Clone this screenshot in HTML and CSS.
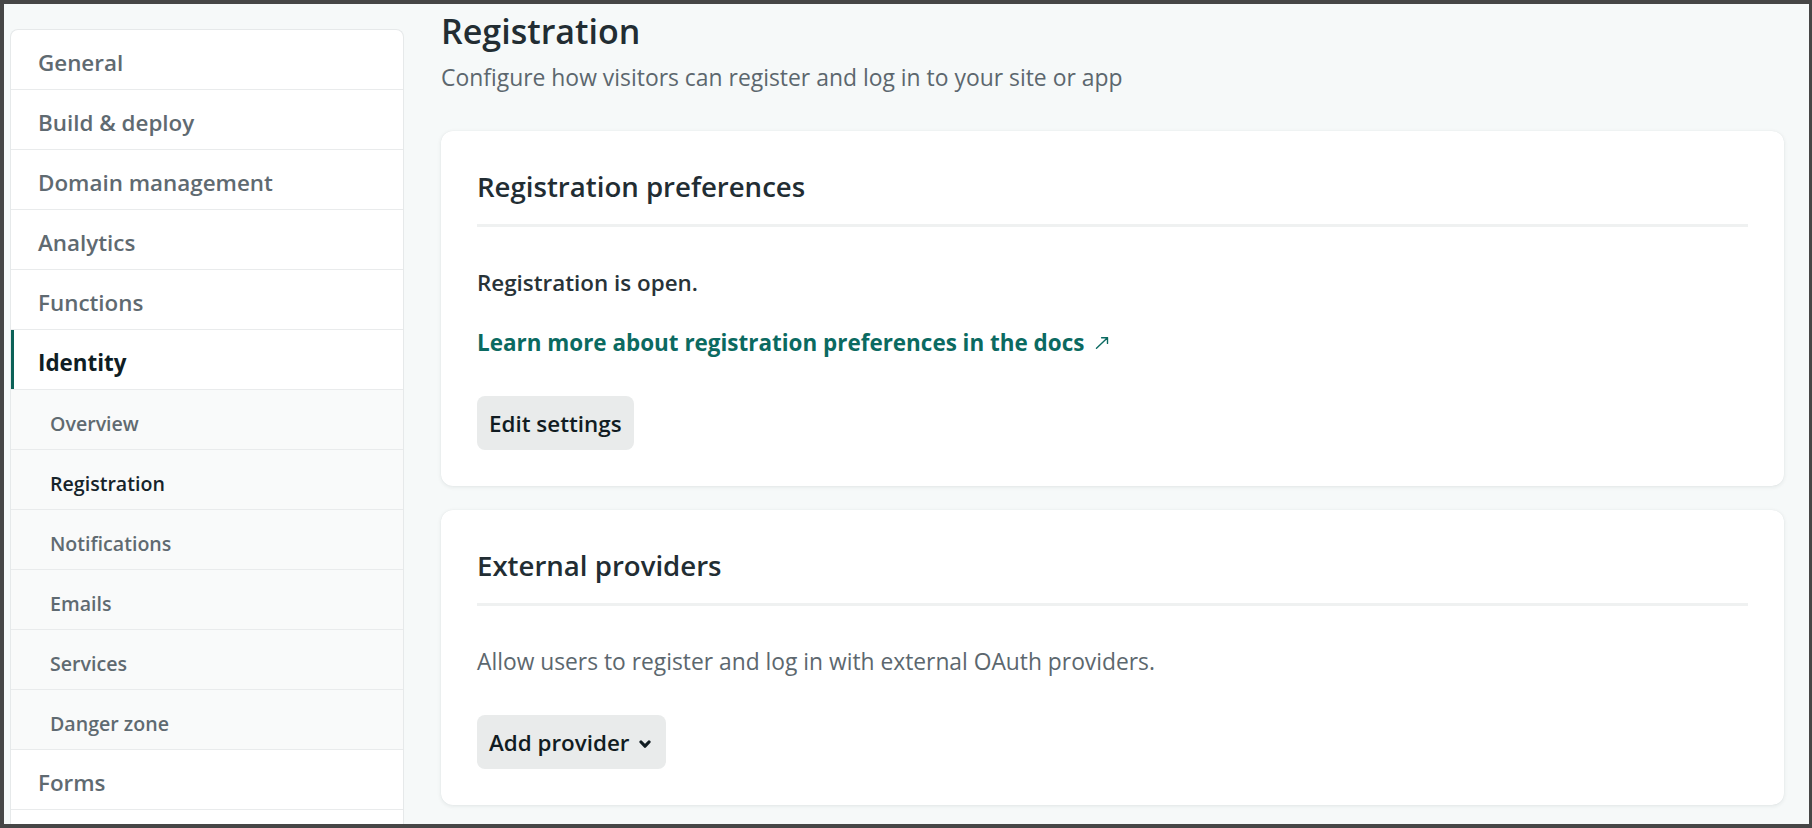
FILE: index.html
```html
<!DOCTYPE html>
<html lang="en">
<head>
<meta charset="utf-8">
<title>Registration</title>
<link rel="stylesheet" href="styles.css">
</head>
<body>
<div class="window">
  <aside class="sidenav">
    <a class="nav-item">General</a>
    <a class="nav-item">Build &amp; deploy</a>
    <a class="nav-item">Domain management</a>
    <a class="nav-item">Analytics</a>
    <a class="nav-item">Functions</a>
    <a class="nav-item nav-item-open">Identity</a>
    <a class="nav-sub">Overview</a>
    <a class="nav-sub nav-sub-active">Registration</a>
    <a class="nav-sub">Notifications</a>
    <a class="nav-sub">Emails</a>
    <a class="nav-sub">Services</a>
    <a class="nav-sub">Danger zone</a>
    <a class="nav-item">Forms</a>
    <div class="nav-item nav-item-empty"></div>
  </aside>
  <main class="content">
    <h1 class="page-title">Registration</h1>
    <p class="page-subtitle">Configure how visitors can register and log in to your site or app</p>

    <section class="card">
      <h2 class="card-title">Registration preferences</h2>
      <p class="card-text card-text-strong">Registration is open.</p>
      <p class="card-text card-text-link"><a class="doc-link">Learn more about registration preferences in the docs<svg class="ext-arrow" width="14" height="12" viewBox="0 0 14 12" aria-hidden="true"><path d="M1.5 11.2 L12.5 0.8 M6.6 0.8 H12.5 V6.4" fill="none" stroke="currentColor" stroke-width="1.4" stroke-linecap="round" stroke-linejoin="round"/></svg></a></p>
      <div class="card-actions"><button class="btn">Edit settings</button></div>
    </section>

    <section class="card">
      <h2 class="card-title">External providers</h2>
      <p class="card-text card-text-muted">Allow users to register and log in with external OAuth providers.</p>
      <div class="card-actions"><button class="btn btn-dropdown">Add provider<svg class="chevron" width="12" height="9" viewBox="0 0 12 9" aria-hidden="true"><path d="M2 2 L6 6.2 L10 2" fill="none" stroke="currentColor" stroke-width="3.2" stroke-linecap="round" stroke-linejoin="round"/></svg></button></div>
    </section>
  </main>
</div>
</body>
</html>
```
FILE: styles.css
```css
html, body {
  margin: 0;
  padding: 0;
}

body {
  font-family: "Open Sans", "Noto Sans", sans-serif;
  background: #464646;
}

.window {
  box-sizing: border-box;
  width: 1812px;
  height: 828px;
  border: 4px solid #464646;
  border-right-width: 3px;
  background: #f6f9f9;
  display: flex;
  align-items: flex-start;
  overflow: hidden;
}

/* Sidebar */
.sidenav {
  flex: 0 0 auto;
  box-sizing: border-box;
  width: 394px;
  margin: 25px 0 0 6px;
  background: #ffffff;
  border: 1px solid #e6e9ea;
  border-bottom: none;
  border-radius: 8px 8px 0 0;
  overflow: hidden;
  display: flex;
  flex-direction: column;
}

.nav-item {
  display: block;
  padding: 18px 0 11px 27px;
  font-size: 22.4px;
  line-height: 30px;
  font-weight: 600;
  color: #5f6a71;
  border-bottom: 1px solid #e9ebec;
  white-space: nowrap;
}

.nav-item-empty {
  height: 30px;
}

.nav-item-open {
  color: #0f1d24;
  font-weight: 700;
  box-shadow: inset 3px 0 0 #0b6157;
}

.nav-sub {
  display: block;
  padding: 20px 0 11px 39px;
  font-size: 19.6px;
  line-height: 28px;
  font-weight: 600;
  color: #5f6a71;
  background: #f9fafa;
  border-bottom: 1px solid #e9ebec;
  white-space: nowrap;
}

.nav-sub-active {
  color: #16232a;
}

/* Main content */
.content {
  flex: 0 0 auto;
  width: 1343px;
  margin-left: 37px;
  padding-top: 5px;
}

.page-title {
  margin: 0;
  font-size: 34px;
  line-height: 44px;
  font-weight: 600;
  color: #222d33;
}

.page-subtitle {
  margin: 7px 0 0;
  font-size: 22.9px;
  line-height: 36px;
  color: #5c676e;
}

.card {
  margin-top: 35px;
  padding: 37px 36px 36px;
  background: #ffffff;
  border-radius: 12px;
  box-shadow: 0 1px 4px rgba(20, 40, 45, 0.09), 0 0 1px rgba(20, 40, 45, 0.08);
}

.card + .card {
  margin-top: 24px;
}

.card-title {
  margin: 0;
  padding-bottom: 20px;
  border-bottom: 3px solid #eff1f1;
  font-size: 27.6px;
  line-height: 36px;
  font-weight: 600;
  color: #222d33;
}

.card-text {
  margin: 38px 0 0;
  font-size: 22.4px;
  line-height: 36px;
}

.card-text-strong {
  font-weight: 600;
  color: #283338;
}

.card-text-muted {
  font-size: 22.8px;
  color: #5c676e;
}

.card-text-link {
  margin-top: 24px;
}

.doc-link {
  font-size: 22.45px;
  font-weight: 700;
  color: #0b6a61;
  cursor: pointer;
}

.ext-arrow {
  margin-left: 11px;
  vertical-align: 2px;
}

.card-actions {
  margin-top: 35px;
}

.btn {
  display: inline-flex;
  align-items: center;
  padding: 13px 12px 11px;
  font-family: inherit;
  font-size: 22.4px;
  line-height: 30px;
  font-weight: 600;
  color: #111c22;
  background: #e9ebeb;
  border: none;
  border-radius: 8px;
  cursor: pointer;
}

.btn-dropdown {
  padding-right: 15px;
}

.chevron {
  margin-left: 10px;
  margin-top: 3px;
}
```
